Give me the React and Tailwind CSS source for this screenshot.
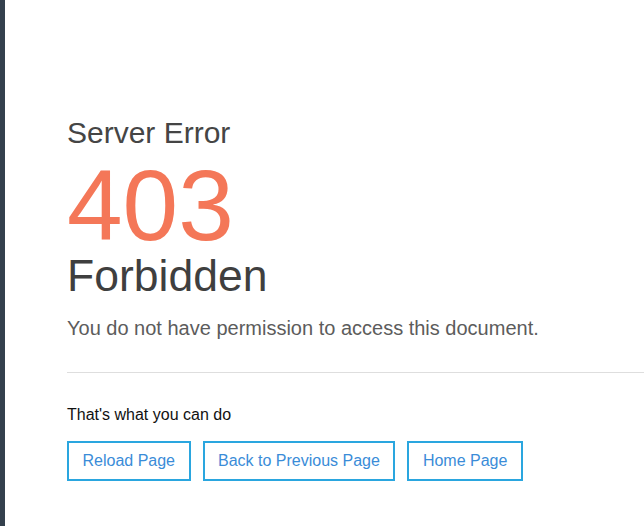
export default function App() {
  const font = { fontFamily: '"Liberation Sans", Arial, Helvetica, sans-serif' };
  return (
    <div className="flex min-h-[526px] w-full bg-white" style={font}>
      <div className="w-[5px] shrink-0 bg-[#34404d]" />
      <div className="flex-1 pl-[62px] pt-[116px]">
        <h2 className="text-[30px] leading-[33px] text-[#454545] font-normal">Server Error</h2>
        <h1 className="mt-[10px] text-[100px] leading-[92px] text-[#f47758] font-normal">403</h1>
        <h3 className="mt-[3px] text-[44.5px] leading-[44px] text-[#3f3f3f] font-normal">Forbidden</h3>
        <p className="mt-[15.5px] text-[20px] leading-[28px] text-[#5c5c5c]">
          You do not have permission to access this document.
        </p>
        <hr className="mt-[30px] border-0 border-t border-[#dedede]" />
        <p className="mt-[30px] text-[16px] leading-[24px] text-[#111111]">That's what you can do</p>
        <div className="mt-[14px] flex gap-3">
          <button className="border-2 border-[#2aa6df] px-[13.5px] py-2 text-[16px] leading-[20px] text-[#3a8cd8] bg-white">
            Reload Page
          </button>
          <button className="border-2 border-[#2aa6df] px-[13.5px] py-2 text-[16px] leading-[20px] text-[#3a8cd8] bg-white">
            Back to Previous Page
          </button>
          <button className="border-2 border-[#2aa6df] px-[13.5px] py-2 text-[16px] leading-[20px] text-[#3a8cd8] bg-white">
            Home Page
          </button>
        </div>
      </div>
    </div>
  );
}
